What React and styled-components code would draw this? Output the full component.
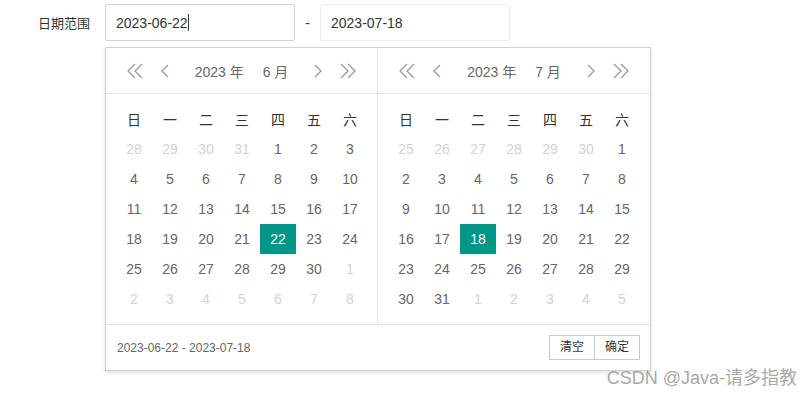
import React from "react"
import styled, { createGlobalStyle } from "styled-components"

const GlobalStyle = createGlobalStyle`
  html, body {
    margin: 0;
    padding: 0;
    background: #fff;
  }
  body {
    font-family: "Liberation Sans", "Noto Sans CJK SC", sans-serif;
    color: #333;
  }
`

const Page = styled.div`
  position: relative;
  width: 812px;
  height: 399px;
  padding-top: 4px;
  box-sizing: border-box;
`

const FormRow = styled.div`
  display: flex;
  align-items: center;
`

const Label = styled.label`
  width: 90px;
  padding-right: 15px;
  text-align: right;
  font-size: 13px;
  color: #333;
`

const Field = styled.div`
  position: relative;
  width: 190px;
  height: 37px;
  box-sizing: border-box;
  border: 1px solid ${p => (p.focused ? "#d2d2d2" : "#eee")};
  border-radius: 2px;
  padding-left: 10px;
  display: flex;
  align-items: center;
  font-size: 14px;
  color: #333;
`

const Caret = styled.span`
  display: inline-block;
  width: 1px;
  height: 17px;
  background: #333;
`

const Dash = styled.span`
  width: 25px;
  text-align: center;
  font-size: 14px;
  color: #333;
`

const Popup = styled.div`
  position: absolute;
  top: 47px;
  left: 105px;
  width: 546px;
  box-sizing: border-box;
  background: #fff;
  border: 1px solid #d2d2d2;
  box-shadow: 0 2px 4px rgba(0, 0, 0, 0.12);
`

const Panels = styled.div`
  display: flex;
`

const Panel = styled.div`
  width: 272px;
  box-sizing: border-box;
  border-right: ${p => (p.divider ? "1px solid #e2e2e2" : "none")};
`

const Header = styled.div`
  height: 45px;
  border-bottom: 1px solid #e2e2e2;
  display: flex;
  align-items: center;
  padding: 0 21px;
`

const ArrowGroup = styled.div`
  display: flex;
  align-items: center;
  gap: 18px;
`

const Title = styled.div`
  flex: 1;
  display: flex;
  justify-content: center;
  gap: 19px;
  font-size: 14px;
  color: #666;
`

const Grid = styled.div`
  display: grid;
  grid-template-columns: repeat(7, 36px);
  grid-auto-rows: 30px;
  padding: 10px;
`

const Cell = styled.div`
  display: flex;
  align-items: center;
  justify-content: center;
  font-size: 14px;
  color: ${p => (p.head ? "#333" : p.muted ? "#d2d2d2" : p.active ? "#fff" : "#666")};
  background: ${p => (p.active ? "#009688" : "transparent")};
`

const Footer = styled.div`
  height: 45px;
  border-top: 1px solid #e2e2e2;
  display: flex;
  align-items: center;
  justify-content: space-between;
  padding: 0 10px 0 11px;
`

const Range = styled.span`
  font-size: 12px;
  color: #666;
`

const Buttons = styled.div`
  display: flex;
`

const Btn = styled.span`
  height: 25px;
  line-height: 23px;
  box-sizing: border-box;
  padding: 0 10px;
  border: 1px solid #c9c9c9;
  font-size: 12px;
  color: #333;
  background: #fff;
  & + & {
    margin-left: -1px;
  }
`

const Watermark = styled.div`
  position: absolute;
  right: 15px;
  bottom: 10px;
  font-size: 18px;
  color: #a9a9a9;
`

const Chevron = ({ dir = "left" }) => (
  <svg width="8" height="14" viewBox="0 0 8 14">
    <path
      d={dir === "left" ? "M7 1 L1 7 L7 13" : "M1 1 L7 7 L1 13"}
      fill="none"
      stroke="#999"
      strokeWidth="1.3"
    />
  </svg>
)

const DoubleChevron = ({ dir = "left" }) => (
  <svg width="16" height="16" viewBox="0 0 16 16">
    <path
      d={
        dir === "left"
          ? "M8 1 L1 8 L8 15 M15 1 L8 8 L15 15"
          : "M1 1 L8 8 L1 15 M8 1 L15 8 L8 15"
      }
      fill="none"
      stroke="#999"
      strokeWidth="1.3"
    />
  </svg>
)

const weekdays = ["日", "一", "二", "三", "四", "五", "六"]

const june = [
  [28, 29, 30, 31, 1, 2, 3],
  [4, 5, 6, 7, 8, 9, 10],
  [11, 12, 13, 14, 15, 16, 17],
  [18, 19, 20, 21, 22, 23, 24],
  [25, 26, 27, 28, 29, 30, 1],
  [2, 3, 4, 5, 6, 7, 8],
]

const july = [
  [25, 26, 27, 28, 29, 30, 1],
  [2, 3, 4, 5, 6, 7, 8],
  [9, 10, 11, 12, 13, 14, 15],
  [16, 17, 18, 19, 20, 21, 22],
  [23, 24, 25, 26, 27, 28, 29],
  [30, 31, 1, 2, 3, 4, 5],
]

const Month = ({ year, month, weeks, selected, divider }) => (
  <Panel divider={divider}>
    <Header>
      <ArrowGroup>
        <DoubleChevron dir="left" />
        <Chevron dir="left" />
      </ArrowGroup>
      <Title>
        <span>{year} 年</span>
        <span>{month} 月</span>
      </Title>
      <ArrowGroup>
        <Chevron dir="right" />
        <DoubleChevron dir="right" />
      </ArrowGroup>
    </Header>
    <Grid>
      {weekdays.map(w => (
        <Cell key={w} head>
          {w}
        </Cell>
      ))}
      {weeks.map((week, r) =>
        week.map((d, c) => {
          const muted = (r === 0 && d > 20) || (r >= 4 && d < 15)
          return (
            <Cell key={r + "-" + c} muted={muted} active={!muted && d === selected}>
              {d}
            </Cell>
          )
        })
      )}
    </Grid>
  </Panel>
)

export default function App() {
  return (
    <Page>
      <GlobalStyle />
      <FormRow>
        <Label>日期范围</Label>
        <Field focused>
          2023-06-22
          <Caret />
        </Field>
        <Dash>-</Dash>
        <Field>2023-07-18</Field>
      </FormRow>
      <Popup>
        <Panels>
          <Month year={2023} month={6} weeks={june} selected={22} divider />
          <Month year={2023} month={7} weeks={july} selected={18} />
        </Panels>
        <Footer>
          <Range>2023-06-22 - 2023-07-18</Range>
          <Buttons>
            <Btn>清空</Btn>
            <Btn>确定</Btn>
          </Buttons>
        </Footer>
      </Popup>
      <Watermark>CSDN @Java-请多指教</Watermark>
    </Page>
  )
}
